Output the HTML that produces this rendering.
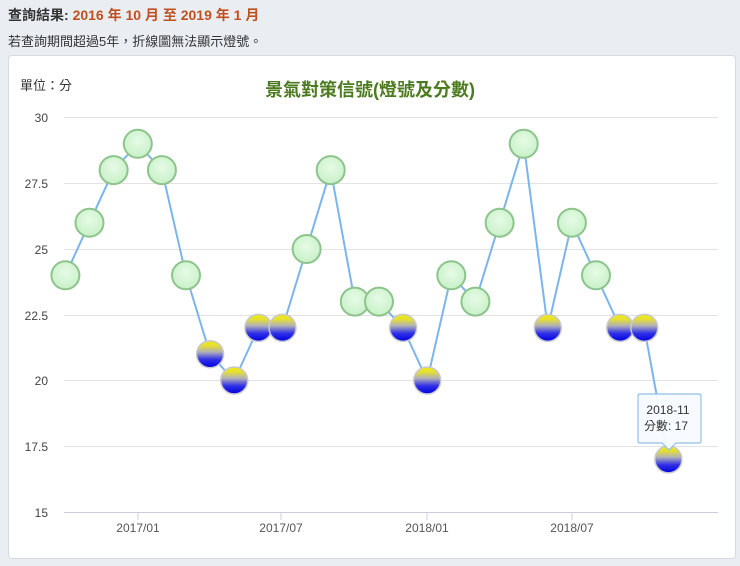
<!DOCTYPE html>
<html><head><meta charset="utf-8"><style>
body{margin:0;width:740px;height:566px;background:#eaeef3;font-family:"Liberation Sans","Noto Sans CJK TC",sans-serif;overflow:hidden;position:relative}
.l1{position:absolute;left:8px;top:5px;font-size:14px;font-weight:bold;color:#333}
.l1 span{color:#c0501e}
.l2{position:absolute;left:8px;top:31px;font-size:13px;color:#333}
.panel{position:absolute;left:8px;top:55px;width:726px;height:502px;background:#fff;border:1px solid #d6dbe1;border-radius:4px}
svg{position:absolute;left:0;top:0}
</style></head><body>
<div class="l1">查詢結果: <span>2016 年 10 月 至 2019 年 1 月</span></div>
<div class="l2">若查詢期間超過5年，折線圖無法顯示燈號。</div>
<div class="panel"></div>
<svg width="740" height="566" font-family="Liberation Sans, Noto Sans CJK TC, sans-serif">
<defs>
<radialGradient id="g" cx="50%" cy="40%" r="60%"><stop offset="0" stop-color="#e6fbe6"/><stop offset="1" stop-color="#c8f0c8"/></radialGradient>
<linearGradient id="b" x1="0" y1="0" x2="0" y2="1"><stop offset="0" stop-color="#eeea10"/><stop offset="0.18" stop-color="#e6e030"/><stop offset="0.42" stop-color="#b0b0b8"/><stop offset="0.7" stop-color="#3030e8"/><stop offset="1" stop-color="#0000e0"/></linearGradient>
</defs>
<text x="20" y="90" font-size="13" fill="#333">單位：分</text>
<text x="370" y="96" font-size="18" fill="#4c7a1e" text-anchor="middle" font-weight="bold">景氣對策信號(燈號及分數)</text>
<g stroke="#e2e2e2" stroke-width="1">
<line x1="64" y1="117.5" x2="718" y2="117.5"/><line x1="64" y1="183.5" x2="718" y2="183.5"/><line x1="64" y1="249.5" x2="718" y2="249.5"/><line x1="64" y1="315.5" x2="718" y2="315.5"/><line x1="64" y1="380.5" x2="718" y2="380.5"/><line x1="64" y1="446.5" x2="718" y2="446.5"/>
</g>
<line x1="64" y1="512.5" x2="718" y2="512.5" stroke="#ccd" />
<g stroke="#ccd"><line x1="138" y1="512" x2="138" y2="520"/><line x1="281" y1="512" x2="281" y2="520"/><line x1="427" y1="512" x2="427" y2="520"/><line x1="572" y1="512" x2="572" y2="520"/></g>
<g font-size="12" fill="#444" text-anchor="end">
<text x="48" y="122">30</text><text x="48" y="188">27.5</text><text x="48" y="254">25</text><text x="48" y="320">22.5</text><text x="48" y="385">20</text><text x="48" y="451">17.5</text><text x="48" y="517">15</text>
</g>
<g font-size="12" fill="#555" text-anchor="middle">
<text x="138" y="532">2017/01</text><text x="281" y="532">2017/07</text><text x="427" y="532">2018/01</text><text x="572" y="532">2018/07</text>
</g>
<polyline fill="none" stroke="#7cb5ec" stroke-width="2" points="65.4,275.3 89.5,222.7 113.6,170.1 137.8,143.8 161.9,170.1 186,275.3 210.1,354.2 234.2,380.5 258.4,327.9 282.5,327.9 306.6,249 330.7,170.1 354.8,301.6 379,301.6 403.1,327.9 427.2,380.5 451.3,275.3 475.4,301.6 499.6,222.7 523.7,143.8 547.8,327.9 571.9,222.7 596,275.3 620.2,327.9 644.3,327.9 668.4,459.4"/>
<g fill="url(#g)" stroke="#8cc48c" stroke-width="2">
<circle cx="65.4" cy="275.3" r="14"/><circle cx="89.5" cy="222.7" r="14"/><circle cx="113.6" cy="170.1" r="14"/><circle cx="137.8" cy="143.8" r="14"/><circle cx="161.9" cy="170.1" r="14"/><circle cx="186" cy="275.3" r="14"/>
<circle cx="306.6" cy="249" r="14"/><circle cx="330.7" cy="170.1" r="14"/><circle cx="354.8" cy="301.6" r="14"/><circle cx="379" cy="301.6" r="14"/>
<circle cx="451.3" cy="275.3" r="14"/><circle cx="475.4" cy="301.6" r="14"/><circle cx="499.6" cy="222.7" r="14"/><circle cx="523.7" cy="143.8" r="14"/><circle cx="571.9" cy="222.7" r="14"/><circle cx="596" cy="275.3" r="14"/>
</g>
<g fill="url(#b)" stroke="#c8c8d0" stroke-width="1.5">
<circle cx="210.1" cy="354.2" r="13.5"/><circle cx="234.2" cy="380.5" r="13.5"/><circle cx="258.4" cy="327.9" r="13.5"/><circle cx="282.5" cy="327.9" r="13.5"/>
<circle cx="403.1" cy="327.9" r="13.5"/><circle cx="427.2" cy="380.5" r="13.5"/><circle cx="547.8" cy="327.9" r="13.5"/><circle cx="620.2" cy="327.9" r="13.5"/><circle cx="644.3" cy="327.9" r="13.5"/><circle cx="668.4" cy="459.4" r="13.5"/>
</g>
<path d="M640,394 H699 Q701,394 701,396 V441 Q701,443 699,443 H676 L669,450 L662,443 H640 Q638,443 638,441 V396 Q638,394 640,394 Z" fill="#f7fbff" fill-opacity="0.95" stroke="#8fc0e8" stroke-width="1.2"/>
<text x="668" y="414" font-size="12" fill="#333" text-anchor="middle">2018-11</text>
<text x="666" y="430" font-size="12" fill="#333" text-anchor="middle">分數: 17</text>
</svg>
</body></html>
